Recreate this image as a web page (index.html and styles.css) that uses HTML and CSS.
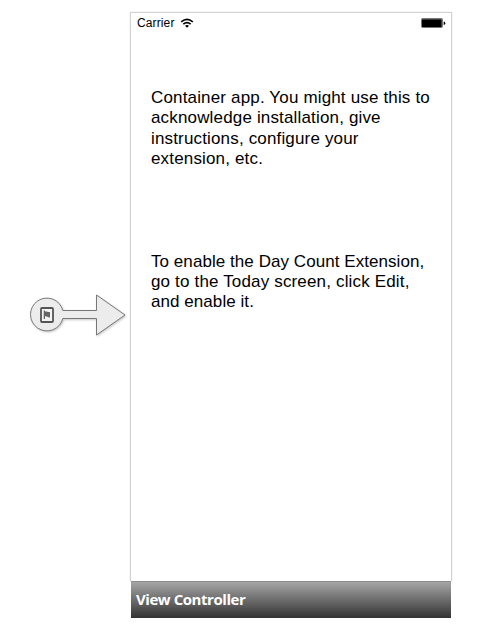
FILE: index.html
```html
<!DOCTYPE html>
<html lang="en">
<head>
<meta charset="utf-8">
<title>View Controller</title>
<link rel="stylesheet" href="styles.css">
</head>
<body>
<main class="canvas">
  <svg class="entry" width="110" height="50" viewBox="0 0 110 50" aria-hidden="true">
    <path class="entry-shape" d="M42.8 20.5H76.5V5L105 25L76.5 45V28.5H42.8A16.4 16.4 0 1 1 42.8 20.5Z"/>
    <rect class="entry-box" x="21" y="18" width="12" height="14" rx="1"/>
    <path class="entry-flag" d="M23.7 20.5h1.3v1c1.6-.5 2.7.7 5 .4v5.5c-2.2.3-3.2-1.5-5-1V29h-1.3z"/>
  </svg>
  <section class="scene">
    <div class="screen">
      <header class="status">
        <span class="carrier">Carrier</span>
        <svg class="wifi" width="14" height="11" viewBox="0 0 14 11" aria-hidden="true">
          <path d="M1.2 3.8Q7 -1 12.8 3.8M3.3 6.2Q7 3 10.7 6.2"/>
          <path class="wifi-dot" d="M5 7.8Q7 6.4 9 7.8L7 9.8Z"/>
        </svg>
        <svg class="battery" width="25" height="10" viewBox="0 0 25 10" aria-hidden="true">
          <rect class="battery-case" x=".5" y=".5" width="21" height="9" rx="1"/>
          <rect x="1" y="1.5" width="19.5" height="7.5"/>
          <path d="M22.7 3.5q1.6 0 1.6 1.7t-1.6 1.7z"/>
        </svg>
      </header>
      <p class="label intro">Container app. You might use this to<br>acknowledge installation, give<br>instructions, configure your<br>extension, etc.</p>
      <p class="label enable"><span class="tight">To enable the Day Count Extension,</span><br>go to the Today screen, click Edit,<br><span class="tight">and enable it.</span></p>
    </div>
    <footer class="dock"><span class="dock-title">View Controller</span></footer>
  </section>
</main>
</body>
</html>
```
FILE: styles.css
```css
body {
  margin: 0;
  background: #fff;
  font-family: "Liberation Sans", Helvetica, Arial, sans-serif;
  color: #000;
}
.canvas {
  display: flex;
  align-items: flex-start;
  padding: 12px 0 0 20px;
}
.entry {
  margin-top: 278px;
  filter: drop-shadow(1px 1px 1px rgba(0, 0, 0, .22));
}
.entry-shape { fill: #ececec; stroke: #777; stroke-width: 1; }
.entry-box { fill: #f4f4f4; stroke: #555; stroke-width: 1.8; }
.entry-flag { fill: #666; }
.scene { width: 322px; }
.screen {
  box-sizing: border-box;
  height: 569px;
  border: 1px solid #d2d2d2;
  border-bottom: 0;
  box-shadow: 0 0 1px #ccc;
  background: #fff;
}
.status {
  display: flex;
  height: 20px;
  padding: 0 5px 0 6px;
}
.carrier {
  font-size: 12px;
  line-height: 21px;
  letter-spacing: .12px;
}
.wifi {
  margin: 5px 0 0 5px;
  fill: none;
  stroke: #000;
  stroke-width: 1.6;
}
.wifi-dot { fill: #000; stroke: none; }
.battery { margin: 5px 0 0 auto; }
.battery-case { fill: #777; stroke: #777; }
.label {
  margin: 0 0 0 20px;
  font-size: 17px;
  line-height: 20.4px;
  letter-spacing: .16px;
  white-space: nowrap;
}
.tight { letter-spacing: .06px; }
.intro { margin-top: 55px; }
.enable { margin-top: 82px; }
.dock {
  box-sizing: border-box;
  display: flex;
  align-items: center;
  height: 37px;
  margin: 0 1px;
  padding: 0 0 2px 5px;
  border-top: 1px solid #8c8c8c;
  background: linear-gradient(#a5a5a5, #333);
}
.dock-title {
  font-family: "Trebuchet MS", "Open Sans", sans-serif;
  font-size: 15px;
  font-weight: 700;
  letter-spacing: -.45px;
  color: #fff;
}
```
